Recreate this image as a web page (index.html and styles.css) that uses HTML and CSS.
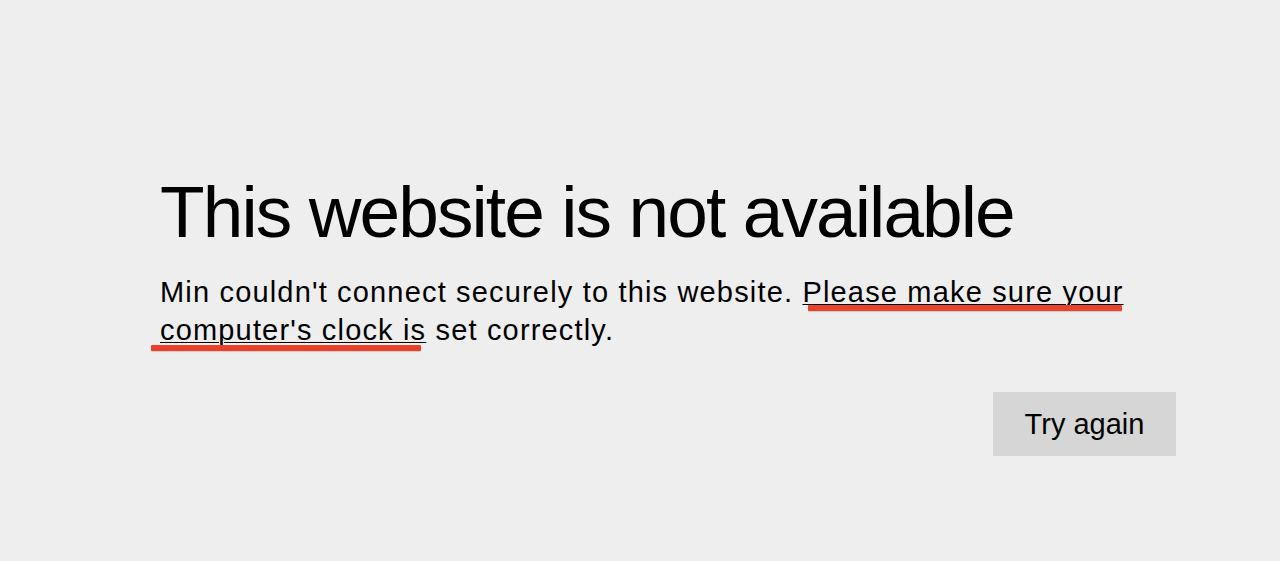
FILE: index.html
```html
<!DOCTYPE html>
<html>
<head>
<meta charset="utf-8">
<link rel="stylesheet" href="styles.css">
</head>
<body>
<main class="page">
  <h1 class="title">This website is not available</h1>
  <p class="desc">Min couldn't connect securely to this website. <a class="link" href="#">Please make sure your computer's clock is</a> set correctly.</p>
  <div class="actions">
    <button class="retry">Try again</button>
  </div>
  <span class="mark mark-1"></span>
  <span class="mark mark-2"></span>
</main>
</body>
</html>
```
FILE: styles.css
```css
html, body {
  margin: 0;
  padding: 0;
  background: #eeeeee;
  height: 100%;
}
body {
  font-family: "Liberation Sans", Arial, sans-serif;
  color: #000;
}
.page {
  position: relative;
  padding: 167px 104px 0 160px;
}
.title {
  margin: 0;
  font-weight: 400;
  font-size: 73px;
  line-height: 90px;
  letter-spacing: -1.9px;
}
.desc {
  margin: 16px 0 0;
  font-size: 29px;
  line-height: 38px;
  letter-spacing: 1.17px;
  width: 1016px;
}
.link {
  color: #000;
  text-decoration: underline;
  text-underline-offset: 2px;
  text-decoration-thickness: 1px;
}
.actions {
  display: flex;
  justify-content: flex-end;
  margin-top: 43px;
}
.retry {
  background: #d6d6d6;
  border: none;
  width: 183px;
  height: 64px;
  font-family: "Liberation Sans", Arial, sans-serif;
  font-size: 29px;
  color: #000;
  padding: 0;
  cursor: pointer;
}
.mark {
  position: absolute;
  height: 6px;
  background: #e8422a;
  border-radius: 1px;
  box-shadow: 0 1px 1px rgba(0,0,0,0.15);
}
.mark-1 {
  left: 808px;
  top: 305px;
  width: 314px;
}
.mark-2 {
  left: 151px;
  top: 345px;
  width: 270px;
}
```
